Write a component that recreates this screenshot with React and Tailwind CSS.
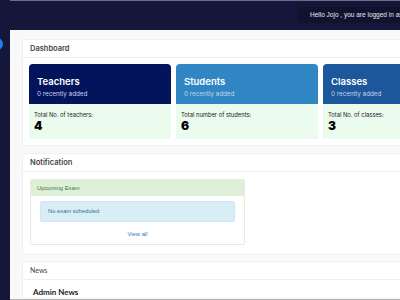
export default function App() {
  const cards = [
    { title: "Teachers", label: "Total No. of teachers:", value: "4", bg: "bg-[#03145c]" },
    { title: "Students", label: "Total number of students:", value: "6", bg: "bg-[#2f86c2]" },
    { title: "Classes", label: "Total No. of classes:", value: "3", bg: "bg-[#1b579a]" },
  ];
  return (
    <div className="w-[400px] h-[300px] overflow-hidden bg-[#15173a] flex flex-col" style={{ fontFamily: "Inter, 'Open Sans', sans-serif" }}>
      <div className="h-px bg-[#6b6d80] ml-[10px] shrink-0" />
      <div className="h-[29px] shrink-0 flex items-start justify-end pt-[6px]">
        <div className="bg-[#11132e] h-[16px] w-[102px] flex items-center pl-[12px] whitespace-nowrap overflow-hidden text-[6.5px] text-[#e6e7ee]" style={{ fontFamily: "'Liberation Sans', Arial, sans-serif" }}>
          Hello Jojo , you are logged in as Admin
        </div>
      </div>
      <div className="flex flex-1 min-h-0">
        <div className="w-[10px] shrink-0 relative">
          <div className="absolute left-[-9px] top-[8px] w-[12px] h-[12px] rounded-full bg-[#1f7cf2]" />
        </div>
        <div className="flex-1 min-w-0 bg-[#f9f9f9] pl-[12px] pt-[9px] overflow-hidden flex flex-col border-b border-[#b5b5b5]">
          <div className="w-[420px] shrink-0 bg-white border border-[#f0f0f0] rounded-[2px]">
            <div className="h-[18px] flex items-center pl-[7px] border-b border-[#efefef] text-[7.5px] font-semibold text-[#444]">Dashboard</div>
            <div className="flex gap-[5px] pl-[6px] pt-[6px] pb-[6px]">
              {cards.map((c) => (
                <div key={c.title} className="w-[142px] shrink-0">
                  <div className={`${c.bg} h-[40px] rounded-t-[4px] pl-[8px] pt-[12px] text-white`}>
                    <div className="text-[9.5px] font-semibold leading-[11px]">{c.title}</div>
                    <div className="text-[6.3px] text-[#c9d3ee] mt-[3px] leading-[8px]">0 recently added</div>
                  </div>
                  <div className="bg-[#ebfcee] h-[35px] pl-[5px] pt-[7px] text-black">
                    <div className="text-[5.8px] leading-[7px] text-[#222]">{c.label}</div>
                    <div className="text-[12px] font-black leading-[14px] mt-[1px]">{c.value}</div>
                  </div>
                </div>
              ))}
            </div>
          </div>
          <div className="w-[420px] shrink-0 mt-[7px] bg-white border border-[#f0f0f0] rounded-[2px]">
            <div className="h-[18px] flex items-center pl-[7px] border-b border-[#efefef] text-[7.5px] font-semibold text-[#444]">Notification</div>
            <div className="pl-[7px] pt-[7px] pb-[9px]">
              <div className="w-[215px] border border-[#e3eedd] rounded-[2px] bg-white" style={{ fontFamily: "'Liberation Sans', Arial, sans-serif" }}>
                <div className="h-[16px] bg-[#dff0d8] flex items-center pl-[6px] text-[5.8px] text-[#3c763d]">Upcoming Exam</div>
                <div className="px-[9px] pt-[5px]">
                  <div className="h-[21px] bg-[#d9edf7] border border-[#cfe8f3] rounded-[2px] flex items-center pl-[7px] text-[5.8px] text-[#31708f]">No exam scheduled</div>
                  <div className="text-center text-[5.8px] text-[#337ab7] pt-[8px] pb-[5px]">View all</div>
                </div>
              </div>
            </div>
          </div>
          <div className="w-[420px] shrink-0 mt-[6px] bg-white border border-[#f0f0f0] rounded-[2px]" style={{ fontFamily: "Lato, sans-serif" }}>
            <div className="h-[18px] flex items-center pl-[7px] border-b border-[#efefef] text-[7px] text-[#444]">News</div>
            <div className="pl-[10px] pt-[6px] text-[8px] font-bold text-[#222]">Admin News</div>
          </div>
        </div>
      </div>
    </div>
  );
}
